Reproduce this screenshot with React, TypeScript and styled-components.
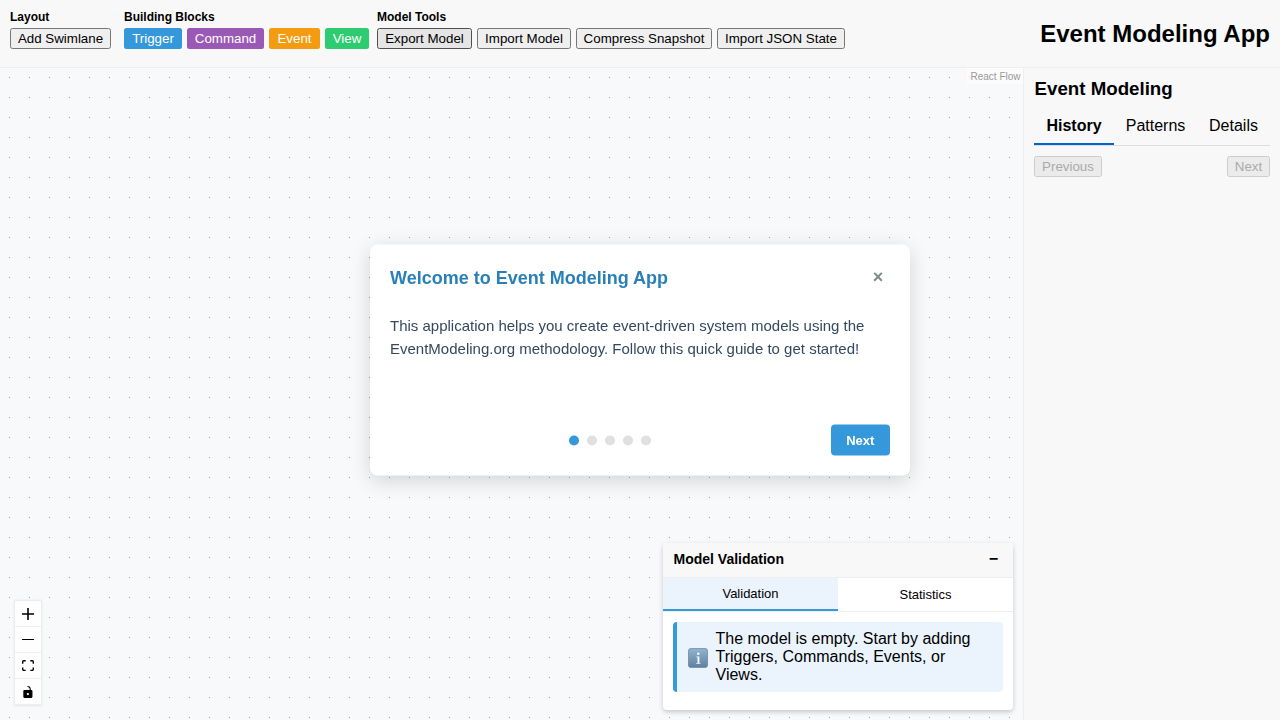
import React, { useState } from "react";
import styled, { createGlobalStyle, css } from "styled-components";

const GlobalStyle = createGlobalStyle`
  * { box-sizing: border-box; }
  body {
    margin: 0;
    color: #000;
    font-family: "Liberation Sans", Arial, Helvetica, sans-serif;
    font-size: 16px;
    overflow: hidden;
  }
  button { font-family: inherit; margin: 0; cursor: pointer; }
  h1, h2, h3, h4, p { margin: 0; }
`;

const AppShell = styled.div`
  display: grid;
  grid-template-rows: 68px minmax(0, 1fr);
  height: 100vh;
  width: 100vw;
`;

/* Toolbar */

const Toolbar = styled.header`
  display: flex;
  justify-content: space-between;
  align-items: center;
  padding: 10px;
  background: #f8f8f8;
  border-bottom: 1px solid #eee;
`;

const ToolGroups = styled.div`
  display: flex;
  align-self: flex-start;
`;

const ToolGroup = styled.section<{ $gapAfter?: number }>`
  display: flex;
  flex-direction: column;
  gap: 4px;
  margin-right: ${(p) => p.$gapAfter ?? 0}px;
`;

const GroupLabel = styled.h4`
  height: 14px;
  font-size: 12px;
  line-height: 14px;
  white-space: nowrap;
`;

const ButtonRow = styled.div`
  display: flex;
  gap: 5px;
`;

const buttonBase = css`
  height: 21px;
  padding: 0;
  border-radius: 2.5px;
  font-size: 13.333px;
  line-height: 15px;
  white-space: nowrap;
`;

const ToolButton = styled.button<{ $width: number; $pressed?: boolean }>`
  ${buttonBase}
  width: ${(p) => p.$width}px;
  color: #000;
  background: ${(p) => (p.$pressed ? "#e5e5e5" : "#efefef")};
  border: 1px solid ${(p) => (p.$pressed ? "#4f4f4f" : "#767676")};

  &:disabled {
    color: #aaa;
    background: #ebebeb;
    border-color: #cdcdcd;
    cursor: default;
  }
`;

const BlockButton = styled.button<{ $width: number; $color: string }>`
  ${buttonBase}
  width: ${(p) => p.$width}px;
  color: #fff;
  background: ${(p) => p.$color};
  border: 0;
`;

const AppTitle = styled.h1`
  font-size: 24px;
  line-height: 28px;
`;

/* Workspace */

const Workspace = styled.main`
  display: grid;
  grid-template-columns: minmax(0, 1fr) 257px;
  min-height: 0;
`;

const Canvas = styled.section`
  position: relative;
  background: #f8f9fb;
`;

const DotGrid = styled.svg`
  display: block;
  width: 100%;
  height: 100%;
`;

const Attribution = styled.span`
  position: absolute;
  top: 0;
  right: 0;
  height: 16px;
  padding: 3px 2.5px 1px 3px;
  background: rgba(255, 255, 255, 0.5);
  color: #999;
  font-size: 10px;
  line-height: 12px;
`;

const Controls = styled.div`
  position: absolute;
  left: 15px;
  bottom: 15px;
  display: flex;
  flex-direction: column;
  box-shadow: 0 0 2px 1px rgba(0, 0, 0, 0.08);
`;

const ControlButton = styled.button`
  display: flex;
  align-items: center;
  justify-content: center;
  width: 26px;
  height: 26px;
  padding: 0;
  border: 0;
  border-bottom: 1px solid #eee;
  background: #fefefe;

  svg {
    width: 100%;
    max-width: 12px;
    max-height: 12px;
  }
`;

/* Sidebar */

const Sidebar = styled.aside`
  padding: 10px;
  background: #f8f8f8;
  border-left: 1px solid #eee;
`;

const SidebarTitle = styled.h2`
  padding-left: 0.5px;
  font-size: 18.72px;
  line-height: 21px;
`;

const SidebarTabs = styled.nav`
  display: flex;
  margin-top: 7px;
  border-bottom: 1px solid #ddd;
`;

const SidebarTab = styled.button<{ $active: boolean; $width: number }>`
  width: ${(p) => p.$width}px;
  height: 39px;
  padding: 3px 0 0;
  border: 0;
  border-bottom: 2px solid ${(p) => (p.$active ? "#0066cc" : "transparent")};
  background: transparent;
  color: #000;
  font-size: 16px;
  font-weight: ${(p) => (p.$active ? 700 : 400)};
`;

const Pager = styled.div`
  display: flex;
  justify-content: space-between;
  margin-top: 10px;
`;

/* Model validation panel */

const Panel = styled.section`
  position: absolute;
  right: 10px;
  bottom: 10px;
  width: 350px;
  height: 167px;
  overflow: hidden;
  border-radius: 4px;
  background: #fff;
  box-shadow: 0 2px 5px rgba(0, 0, 0, 0.2);
`;

const PanelHeader = styled.header`
  display: flex;
  align-items: center;
  justify-content: space-between;
  height: 35px;
  padding: 0 15px 2px 10.5px;
  background: #f8f8f8;
  border-bottom: 1px solid #eee;
`;

const PanelTitle = styled.h3`
  font-size: 14px;
  line-height: 16px;
`;

const CollapseButton = styled.button`
  padding: 0;
  border: 0;
  background: none;
  font-size: 16px;
  font-weight: 700;
  line-height: 18px;
`;

const PanelTabs = styled.div`
  display: grid;
  grid-template-columns: 1fr 1fr;
  height: 34px;
  border-bottom: 1px solid #eee;
`;

const PanelTab = styled.button<{ $active: boolean }>`
  padding: 0;
  border: 0;
  border-bottom: ${(p) => (p.$active ? "2px solid #3498db" : "0")};
  background: ${(p) => (p.$active ? "#ebf4fc" : "#fff")};
  color: #000;
  font-size: 13px;
`;

const InfoMessage = styled.div`
  display: flex;
  align-items: center;
  gap: 7.5px;
  height: 70px;
  margin: 10px;
  padding: 0 20px 0 11px;
  border-left: 4px solid #3498db;
  border-radius: 4px;
  background: #ebf4fc;
  font-size: 16px;
  line-height: 18px;

  svg {
    flex: none;
    margin-top: 2px;
  }
`;

/* Welcome dialog */

const Dialog = styled.section`
  position: fixed;
  top: 50%;
  left: 50%;
  transform: translate(-50%, -50%);
  display: flex;
  flex-direction: column;
  width: 540px;
  height: 231px;
  padding: 20px;
  border-radius: 8px;
  background: #fff;
  box-shadow: 0 5px 20px rgba(0, 0, 0, 0.15);
`;

const DialogHeader = styled.header`
  display: flex;
  align-items: center;
  justify-content: space-between;
  height: 27px;
`;

const DialogTitle = styled.h2`
  color: #2980b9;
  font-size: 18px;
  line-height: 21px;
`;

const CloseButton = styled.button`
  width: 24px;
  height: 24px;
  padding: 0 0 3px;
  border: 0;
  background: none;
  color: #7f8c8d;
  font-size: 18px;
  font-weight: 700;
  line-height: 20px;
`;

const DialogText = styled.p`
  margin-top: 22px;
  color: #34495e;
  font-size: 15px;
  line-height: 23px;
`;

const DialogFooter = styled.footer`
  display: grid;
  grid-template-columns: 1fr auto;
  align-items: center;
  margin-top: auto;
`;

const Steps = styled.div`
  display: flex;
  justify-content: center;
  gap: 8px;
`;

const StepDot = styled.i<{ $active: boolean }>`
  width: 10px;
  height: 10px;
  border-radius: 50%;
  background: ${(p) => (p.$active ? "#3498db" : "#e0e0e0")};
`;

const NextButton = styled.button`
  width: 59.5px;
  height: 31px;
  padding: 0;
  border: 0;
  border-radius: 4px;
  background: #3498db;
  color: #fff;
  font-size: 13px;
  font-weight: 700;
`;

const blocks = [
  { label: "Trigger", color: "#3498db", width: 58 },
  { label: "Command", color: "#9b59b6", width: 77 },
  { label: "Event", color: "#f39c12", width: 51 },
  { label: "View", color: "#2ecc71", width: 44 },
];

const tools = [
  { label: "Export Model", width: 95 },
  { label: "Import Model", width: 94 },
  { label: "Compress Snapshot", width: 136 },
  { label: "Import JSON State", width: 128 },
];

const sidebarTabs = [
  { label: "History", width: 80 },
  { label: "Patterns", width: 83 },
  { label: "Details", width: 73 },
];

const controls = [
  {
    label: "zoom in",
    viewBox: "0 0 32 32",
    d: "M32 18.133H18.133V32h-4.266V18.133H0v-4.266h13.867V0h4.266v13.867H32z",
  },
  { label: "zoom out", viewBox: "0 0 32 5", d: "M0 0h32v4.2H0z" },
  {
    label: "fit view",
    viewBox: "0 0 32 30",
    d: "M3.692 4.63c0-.53.4-.938.939-.938h5.215V0H4.708C2.13 0 0 2.054 0 4.63v5.216h3.692V4.631zM27.354 0h-5.2v3.692h5.17c.53 0 .984.4.984.939v5.215H32V4.631A4.624 4.624 0 0027.354 0zm.954 24.83c0 .532-.4.94-.939.94h-5.215v3.768h5.215c2.577 0 4.631-2.13 4.631-4.707v-5.139h-3.692v5.139zm-23.677.94c-.531 0-.939-.4-.939-.94v-5.138H0v5.139c0 2.577 2.13 4.707 4.708 4.707h5.138V25.77H4.631z",
  },
  {
    label: "toggle interactivity",
    viewBox: "0 0 25 32",
    d: "M21.333 10.667H19.81V7.619C19.81 3.429 16.38 0 12.19 0c-4.114 1.828-1.37 2.133.305 2.438 1.676.305 4.42 2.59 4.42 5.181v3.048H3.047A3.056 3.056 0 000 13.714v15.238A3.056 3.056 0 003.048 32h18.285a3.056 3.056 0 003.048-3.048V13.714a3.056 3.056 0 00-3.048-3.047zM12.19 24.533a3.056 3.056 0 01-3.047-3.047 3.056 3.056 0 013.047-3.048 3.056 3.056 0 013.048 3.048 3.056 3.056 0 01-3.048 3.047z",
  },
];

const InfoIcon = () => (
  <svg width="20" height="20" viewBox="0 0 20 20" aria-label="Information">
    <defs>
      <linearGradient id="info-fill" x1="0" y1="0" x2="0" y2="1">
        <stop offset="0" stopColor="#91b4d0" />
        <stop offset="1" stopColor="#5f80a0" />
      </linearGradient>
    </defs>
    <rect x="0.4" y="0.4" width="19.2" height="19.2" rx="2.8" fill="url(#info-fill)" stroke="#6885a0" strokeWidth="0.8" />
    <circle cx="10.3" cy="5.7" r="1.3" fill="#f4f8fb" />
    <path d="M8.4 8.4h3v6.5h1.1v.8H8.2v-.8h1.3V9.2H8.4z" fill="#f4f8fb" />
  </svg>
);

export default function App() {
  const [sideTab, setSideTab] = useState("History");
  const [panelTab, setPanelTab] = useState("Validation");
  const [step, setStep] = useState(0);
  const [open, setOpen] = useState(true);

  return (
    <>
      <GlobalStyle />
      <AppShell>
        <Toolbar>
          <ToolGroups>
            <ToolGroup $gapAfter={13}>
              <GroupLabel>Layout</GroupLabel>
              <ButtonRow>
                <ToolButton $width={101}>Add Swimlane</ToolButton>
              </ButtonRow>
            </ToolGroup>
            <ToolGroup $gapAfter={8}>
              <GroupLabel>Building Blocks</GroupLabel>
              <ButtonRow>
                {blocks.map((b) => (
                  <BlockButton key={b.label} $width={b.width} $color={b.color}>
                    {b.label}
                  </BlockButton>
                ))}
              </ButtonRow>
            </ToolGroup>
            <ToolGroup>
              <GroupLabel>Model Tools</GroupLabel>
              <ButtonRow>
                {tools.map((t, i) => (
                  <ToolButton key={t.label} $width={t.width} $pressed={i === 0}>
                    {t.label}
                  </ToolButton>
                ))}
              </ButtonRow>
            </ToolGroup>
          </ToolGroups>
          <AppTitle>Event Modeling App</AppTitle>
        </Toolbar>

        <Workspace>
          <Canvas>
            <DotGrid>
              <defs>
                <pattern id="dots" width="20" height="20" patternUnits="userSpaceOnUse">
                  <circle cx="9.5" cy="9.5" r="0.5" fill="#81818a" />
                </pattern>
              </defs>
              <rect width="100%" height="100%" fill="url(#dots)" />
            </DotGrid>
            <Attribution>React Flow</Attribution>
            <Controls>
              {controls.map((c) => (
                <ControlButton key={c.label} aria-label={c.label}>
                  <svg viewBox={c.viewBox}>
                    <path d={c.d} />
                  </svg>
                </ControlButton>
              ))}
            </Controls>
            <Panel>
              <PanelHeader>
                <PanelTitle>Model Validation</PanelTitle>
                <CollapseButton>−</CollapseButton>
              </PanelHeader>
              <PanelTabs>
                {["Validation", "Statistics"].map((t) => (
                  <PanelTab key={t} $active={t === panelTab} onClick={() => setPanelTab(t)}>
                    {t}
                  </PanelTab>
                ))}
              </PanelTabs>
              <InfoMessage>
                <InfoIcon />
                <p>The model is empty. Start by adding Triggers, Commands, Events, or Views.</p>
              </InfoMessage>
            </Panel>
          </Canvas>

          <Sidebar>
            <SidebarTitle>Event Modeling</SidebarTitle>
            <SidebarTabs>
              {sidebarTabs.map((t) => (
                <SidebarTab
                  key={t.label}
                  $width={t.width}
                  $active={t.label === sideTab}
                  onClick={() => setSideTab(t.label)}
                >
                  {t.label}
                </SidebarTab>
              ))}
            </SidebarTabs>
            <Pager>
              <ToolButton $width={68} disabled>
                Previous
              </ToolButton>
              <ToolButton $width={43} disabled>
                Next
              </ToolButton>
            </Pager>
          </Sidebar>
        </Workspace>
      </AppShell>

      {open && (
        <Dialog role="dialog">
          <DialogHeader>
            <DialogTitle>Welcome to Event Modeling App</DialogTitle>
            <CloseButton onClick={() => setOpen(false)}>×</CloseButton>
          </DialogHeader>
          <DialogText>
            This application helps you create event-driven system models using the EventModeling.org methodology.
            Follow this quick guide to get started!
          </DialogText>
          <DialogFooter>
            <Steps>
              {[0, 1, 2, 3, 4].map((n) => (
                <StepDot key={n} $active={n === step} />
              ))}
            </Steps>
            <NextButton onClick={() => setStep((s) => Math.min(s + 1, 4))}>Next</NextButton>
          </DialogFooter>
        </Dialog>
      )}
    </>
  );
}
